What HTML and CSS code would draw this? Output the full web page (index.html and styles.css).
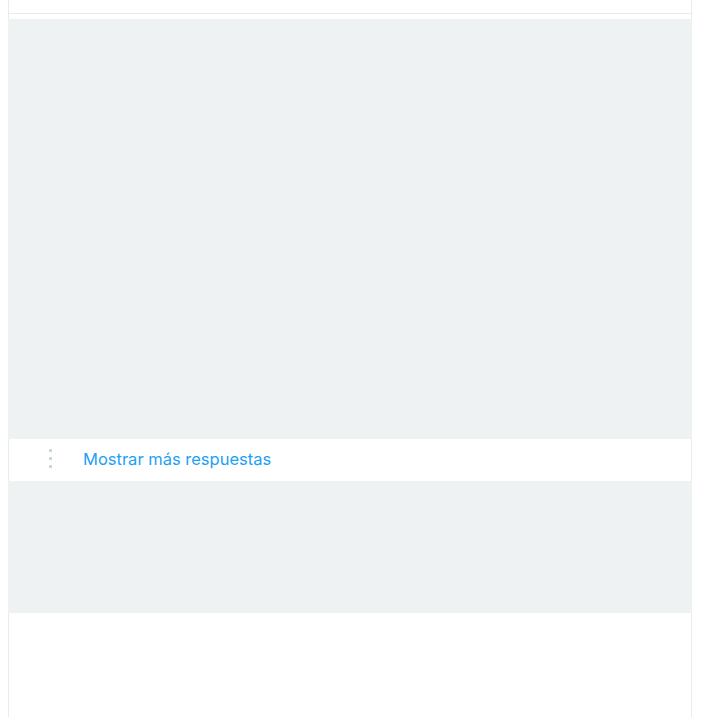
FILE: index.html
```html
<!DOCTYPE html>
<html lang="es">
<head>
<meta charset="utf-8">
<link rel="stylesheet" href="styles.css">
</head>
<body>
<div class="page">
  <div class="top"></div>
  <div class="spacer"></div>
  <div class="placeholder big"></div>
  <div class="more-row">
    <div class="dots"><span></span><span></span><span></span></div>
    <a class="more-link" href="#">Mostrar más respuestas</a>
  </div>
  <div class="placeholder small"></div>
</div>
</body>
</html>
```
FILE: styles.css
```css
html, body {
  margin: 0;
  padding: 0;
  background: #ffffff;
}
.page {
  margin-left: 8px;
  width: 684px;
  min-height: 717px;
  box-sizing: border-box;
  border-left: 1px solid #e6ecf0;
  border-right: 1px solid #e6ecf0;
}
.top {
  height: 13px;
  border-bottom: 1px solid #e6ecf0;
}
.spacer {
  height: 5px;
}
.placeholder {
  background: #eef2f3;
  margin: 0 -1px;
}
.placeholder.big {
  height: 420px;
}
.placeholder.small {
  height: 132px;
}
.more-row {
  height: 42px;
  display: flex;
  align-items: center;
}
.dots {
  width: 74px;
  display: flex;
  flex-direction: column;
  align-items: center;
  gap: 5px;
  padding-left: 9px;
  box-sizing: border-box;
  margin-top: -3px;
}
.dots span {
  width: 3px;
  height: 3px;
  background: #ccd6dd;
}
.more-link {
  font-family: Inter, "Noto Sans", sans-serif;
  font-size: 16.5px;
  line-height: 20px;
  margin-bottom: 2px;
  color: #1da1f2;
  text-decoration: none;
}
```
